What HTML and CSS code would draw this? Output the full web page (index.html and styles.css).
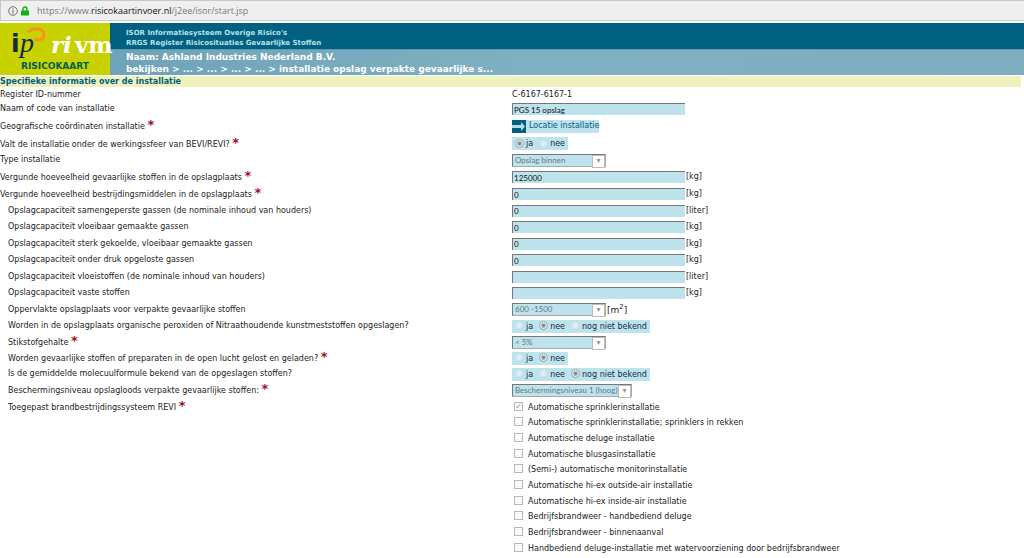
FILE: index.html
```html
<!DOCTYPE html>
<html lang="nl">
<head>
<meta charset="utf-8">
<title>Risicokaart - invoer</title>
<link rel="stylesheet" href="styles.css">
</head>
<body>
<div class="urlbar">
  <svg class="info-icon" viewBox="0 0 10 10"><circle cx="5" cy="5" r="4.3" fill="none" stroke="#666" stroke-width=".9"/><path d="M5 4.3v3.2M5 2.4v1" stroke="#555" stroke-width="1"/></svg>
  <svg class="lock-icon" viewBox="0 0 8 10"><path d="M2 5V3a2 2 0 0 1 4 0v2" fill="none" stroke="#12b212" stroke-width="1.4"/><rect y="4.4" width="8" height="5.2" rx=".6" fill="#12b212"/></svg>
  <span class="url">https://www.<b>risicokaartinvoer.nl</b>/j2ee/isor/start.jsp</span>
</div>
<header class="header">
  <div class="logo">
    <svg class="logo-art" viewBox="0 0 116 37" role="img" aria-label="ipo rivm">
      <path d="M28.500 9.500C30 7 33 6 36.500 6c4.500 0 7.500 2 7.500 5.500 0 3.500-2.500 5.500-6.500 5.500-1.500 0-2.500-.5-3-1.500" fill="none" stroke="#f7941d" stroke-width="3"/>
      <text class="logo-i" x="11" y="29">i</text>
      <text class="logo-p" x="20" y="29">p</text>
      <text class="logo-rivm" x="51" y="30">ri</text>
      <text class="logo-rivm upright" x="75" y="30">vm</text>
    </svg>
    <div class="logo-name">RISICOKAART</div>
  </div>
  <div class="titles">
    <div class="system"><div>ISOR Informatiesysteem Overige Risico's</div><div>RRGS Register Risicosituaties Gevaarlijke Stoffen</div></div>
    <div class="trail"><div>Naam: Ashland Industries Nederland B.V.</div><div>bekijken &gt; ... &gt; ... &gt; ... &gt; ... &gt; installatie opslag verpakte gevaarlijke s...</div></div>
  </div>
</header>
<h1 class="section-title">Specifieke informatie over de installatie</h1>
<form class="form">
  <div class="row short"><span class="label">Register ID-nummer</span><div class="value">C-6167-6167-1</div></div>
  <div class="row"><label class="label" for="naam">Naam of code van installatie</label><div class="value"><input class="text" id="naam" value="PGS 15 opslag"></div></div>
  <div class="row high"><span class="label req">Geografische coördinaten installatie <i>*</i></span><div class="value"><a class="location" href="#"><svg class="arrow" viewBox="0 0 14 13"><rect width="14" height="13" fill="#006080"/><path d="M0 5h9V2l4 4.500L9 11V8H0z" fill="#b5dce6"/></svg>Locatie installatie</a></div></div>
  <div class="row tall"><span class="label req">Valt de installatie onder de werkingssfeer van BEVI/REVI? <i>*</i></span><div class="value"><div class="radios"><label><input type="radio" name="bevi" disabled checked>ja</label><label><input type="radio" name="bevi" disabled>nee</label></div></div></div>
  <div class="row"><label class="label" for="type">Type installatie</label><div class="value"><span class="select"><select id="type" disabled><option>Opslag binnen</option></select></span></div></div>
  <div class="row high"><label class="label req" for="gev">Vergunde hoeveelheid gevaarlijke stoffen in de opslagplaats <i>*</i></label><div class="value"><input class="text" id="gev" value="125000">[kg]</div></div>
  <div class="row"><label class="label req" for="best">Vergunde hoeveelheid bestrijdingsmiddelen in de opslagplaats <i>*</i></label><div class="value"><input class="text" id="best" value="0">[kg]</div></div>
  <div class="row tall sub"><label class="label" for="c1">Opslagcapaciteit samengeperste gassen (de nominale inhoud van houders)</label><div class="value"><input class="text" id="c1" value="0">[liter]</div></div>
  <div class="row sub"><label class="label" for="c2">Opslagcapaciteit vloeibaar gemaakte gassen</label><div class="value"><input class="text" id="c2" value="0">[kg]</div></div>
  <div class="row tall sub"><label class="label" for="c3">Opslagcapaciteit sterk gekoelde, vloeibaar gemaakte gassen</label><div class="value"><input class="text" id="c3" value="0">[kg]</div></div>
  <div class="row sub"><label class="label" for="c4">Opslagcapaciteit onder druk opgeloste gassen</label><div class="value"><input class="text" id="c4" value="0">[kg]</div></div>
  <div class="row tall sub"><label class="label" for="c5">Opslagcapaciteit vloeistoffen (de nominale inhoud van houders)</label><div class="value"><input class="text" id="c5">[liter]</div></div>
  <div class="row sub"><label class="label" for="c6">Opslagcapaciteit vaste stoffen</label><div class="value"><input class="text" id="c6">[kg]</div></div>
  <div class="row tall sub"><label class="label" for="opp">Oppervlakte opslagplaats voor verpakte gevaarlijke stoffen</label><div class="value"><span class="select"><select id="opp" disabled><option>600 -1500</option></select></span><span class="unit">[m<sup>2</sup>]</span></div></div>
  <div class="row sub"><span class="label">Worden in de opslagplaats organische peroxiden of Nitraathoudende kunstmeststoffen opgeslagen?</span><div class="value"><div class="radios"><label><input type="radio" name="per" disabled>ja</label><label><input type="radio" name="per" disabled checked>nee</label><label><input type="radio" name="per" disabled>nog niet bekend</label></div></div></div>
  <div class="row sub"><label class="label req" for="stik">Stikstofgehalte <i>*</i></label><div class="value"><span class="select"><select id="stik" disabled><option>&lt; 5%</option></select></span></div></div>
  <div class="row sub"><span class="label req">Worden gevaarlijke stoffen of preparaten in de open lucht gelost en geladen? <i>*</i></span><div class="value"><div class="radios"><label><input type="radio" name="lucht" disabled>ja</label><label><input type="radio" name="lucht" disabled checked>nee</label></div></div></div>
  <div class="row sub"><span class="label">Is de gemiddelde molecuulformule bekend van de opgeslagen stoffen?</span><div class="value"><div class="radios"><label><input type="radio" name="mol" disabled>ja</label><label><input type="radio" name="mol" disabled>nee</label><label><input type="radio" name="mol" disabled checked>nog niet bekend</label></div></div></div>
  <div class="row sub"><label class="label req" for="niv">Beschermingsniveau opslagloods verpakte gevaarlijke stoffen: <i>*</i></label><div class="value"><span class="select wide"><select id="niv" disabled><option>Beschermingsniveau 1 (hoog)</option></select></span></div></div>
  <div class="row sub last"><span class="label req">Toegepast brandbestrijdingssysteem REVI <i>*</i></span>
    <div class="checks">
      <label><input type="checkbox" disabled checked>Automatische sprinklerinstallatie</label>
      <label><input type="checkbox" disabled>Automatische sprinklerinstallatie; sprinklers in rekken</label>
      <label><input type="checkbox" disabled>Automatische deluge installatie</label>
      <label><input type="checkbox" disabled>Automatische blusgasinstallatie</label>
      <label><input type="checkbox" disabled>(Semi-) automatische monitorinstallatie</label>
      <label><input type="checkbox" disabled>Automatische hi-ex outside-air installatie</label>
      <label><input type="checkbox" disabled>Automatische hi-ex inside-air installatie</label>
      <label><input type="checkbox" disabled>Bedrijfsbrandweer - handbediend deluge</label>
      <label><input type="checkbox" disabled>Bedrijfsbrandweer - binnenaanval</label>
      <label><input type="checkbox" disabled>Handbediend deluge-installatie met watervoorziening door bedrijfsbrandweer</label>
    </div>
  </div>
</form>
</body>
</html>
```
FILE: styles.css
```css
* { box-sizing: border-box; }
body { margin: 0; background: #fff; color: #222; font: 8px/12px "DejaVu Sans", Verdana, sans-serif; }
input, select { font: inherit; margin: 0; }

.urlbar { display: flex; align-items: center; height: 21px; margin-bottom: 2px; padding-left: 7px; background: #efefef; border: 1px solid #c8c8c8; border-right: 0; }
.info-icon { width: 10px; height: 10px; margin-right: 3px; }
.lock-icon { width: 8px; height: 10px; margin-right: 8px; }
.url { font: 9px/14px "Open Sans", sans-serif; color: #777; }
.url b { font-weight: 400; color: #111; }

.header { display: flex; height: 52px; margin-bottom: 1px; }
.logo { position: relative; z-index: 1; width: 110px; background: #c8d200; }
.logo-art { display: block; width: 116px; height: 37px; }
.logo-i { font: bold 25px "DejaVu Sans", sans-serif; fill: #14284b; }
.logo-p { font: italic 28px "Liberation Serif", serif; fill: #14284b; }
.logo-rivm { font: italic bold 23px "DejaVu Serif", serif; fill: #fff; }
.logo-rivm.upright { font-style: normal; }
.logo-name { text-align: center; font: bold 9px/13px "DejaVu Sans", sans-serif; color: #006050; }
.titles { flex: 1; display: grid; grid-template-rows: 26px 26px; font-weight: 700; }
.system { padding: 5px 16px 0; background: #006080; color: #b9e2ec; font-size: 7px; line-height: 10px; }
.trail { padding: 1px 16px 0; background: linear-gradient(90deg, #6fa3b7, #7fb0c2 45%, #7fadbf); border-top: 1px solid #5f97ad; color: #fff; font-size: 9px; line-height: 12px; }

.section-title { margin: 0 3px 1px 0; font-size: 8px; line-height: 11px; background: #eff2bd; color: #006080; }

.row { display: grid; grid-template-columns: 1fr 1fr; height: 16px; align-items: center; }
.short { height: 13px; }
.tall { height: 17px; }
.high { height: 18px; }
.sub .label { padding-left: 8px; }
.req { padding-top: 2px; }
.req i { font: bold 13px/1px "DejaVu Sans", sans-serif; color: #a30d25; }
.value { display: flex; align-items: center; }
.text { width: 173px; height: 12px; margin-right: 1px; padding: 0 1px; border: 0; border-top: 1px solid #777; border-left: 1px solid #777; background: #bee3ec; color: #111; font-family: Lato, sans-serif; }
.location { display: flex; align-items: center; height: 13px; gap: 3px; background: #bee3ec; color: #006080; text-decoration: none; }
.arrow { width: 14px; height: 13px; }
.radios { display: flex; align-items: center; height: 13px; padding: 0 3px; gap: 6px; background: #bee3ec; color: #103040; }
.radios label { display: flex; align-items: center; gap: 2px; padding-top: 1px; }
.radios input { appearance: none; width: 9px; height: 9px; margin-bottom: 2px; border-radius: 50%; border: 1px solid #c3d8de; background: #d9edf2; }
.radios input:checked { border-color: #9aa9ad; background: radial-gradient(circle, #888 0 1px, #e3eff2 3px); }
.select { position: relative; width: 94px; height: 13px; }
.wide { width: 120px; }
.select select { display: block; appearance: none; width: 100%; height: 100%; padding: 0 2px; border: 1px solid #aaa; border-top-color: #777; border-left-color: #777; border-radius: 0; background: #bee3ec; color: #64787e; opacity: 1; font-family: Lato, sans-serif; line-height: 11px; }
.select::after { content: "▾"; position: absolute; top: 1px; right: 1px; width: 11px; height: 11px; background: #fff; border: 1px solid #bbb; color: #999; text-align: center; line-height: 9px; }
.unit { margin-left: 1px; font-size: 9px; }
.unit sup { font-size: 7px; line-height: 1px; }
.last { height: auto; align-items: start; padding-top: 1px; }
.last > .label { line-height: 14px; }
.checks label { display: flex; align-items: center; gap: 5px; height: 16px; padding: 1px 0 0 2px; }
.checks label:nth-child(3n + 2) { height: 15px; }
.checks input { appearance: none; width: 9px; height: 9px; margin-bottom: 3px; border: 1px solid #b9b9b9; background: #fafafa; }
.checks input:checked { display: grid; place-items: center; }
.checks input:checked::after { content: "✓"; font-size: 8px; line-height: 7px; color: #888; }
```
